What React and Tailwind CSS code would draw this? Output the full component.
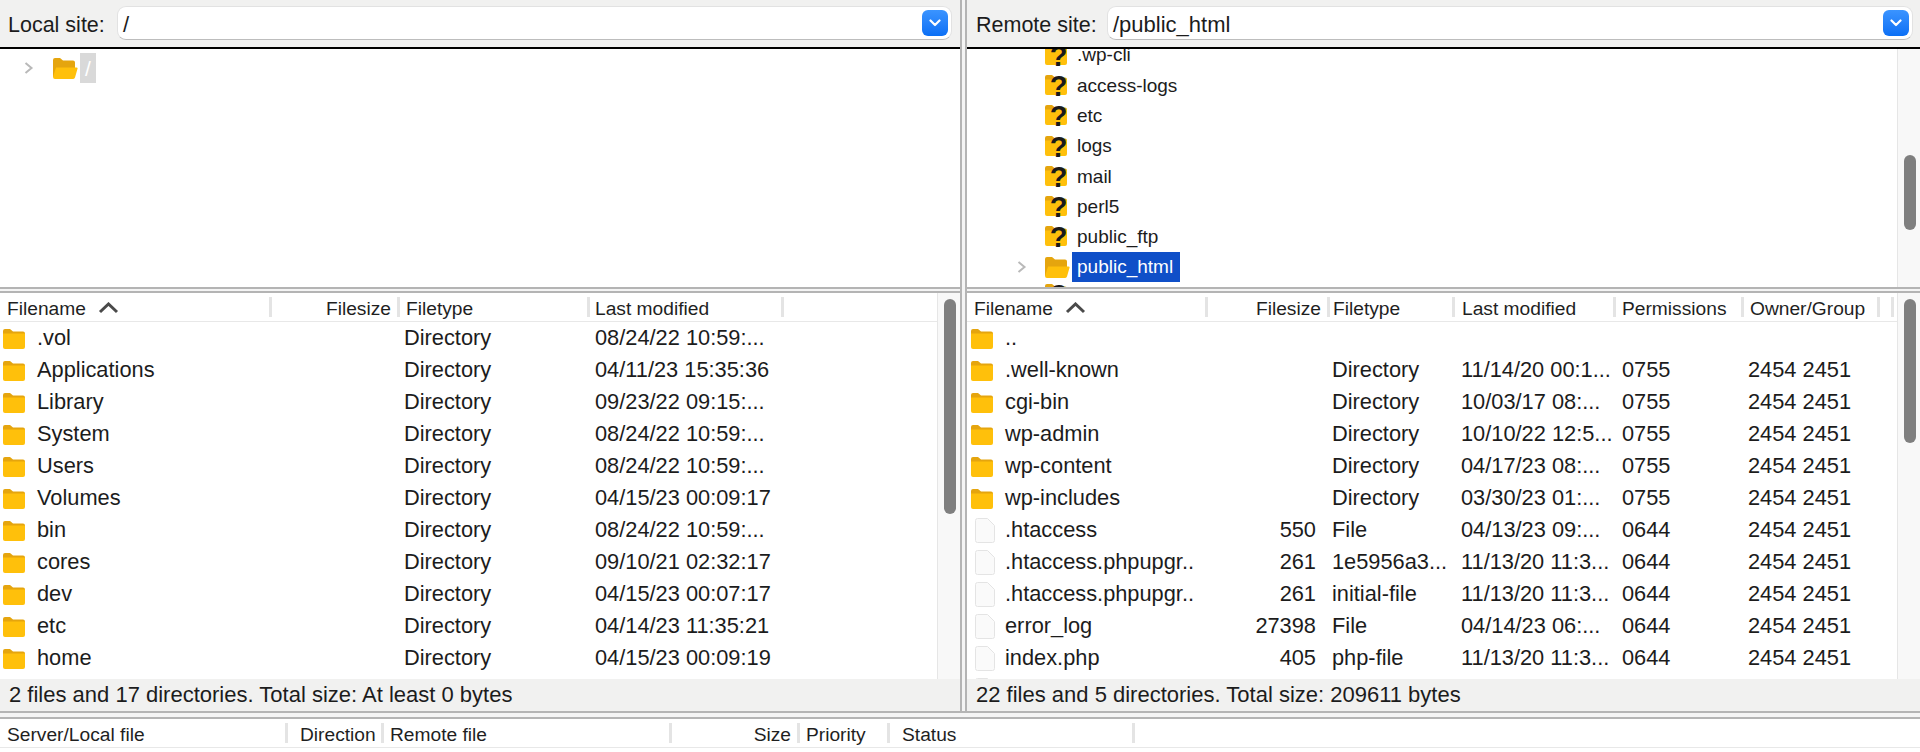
import React from "react";

const localCols = [
  { label: "Filename", w: "w-[272px]", pad: "pl-[7px]", sort: true },
  { label: "Filesize", w: "w-[128px]", pad: "pr-[6px]", right: true },
  { label: "Filetype", w: "w-[190px]", pad: "pl-[6px]" },
  { label: "Last modified", w: "w-[194px]", pad: "pl-[5px]" },
];

const remoteCols = [
  { label: "Filename", w: "w-[241px]", pad: "pl-[7px]", sort: true },
  { label: "Filesize", w: "w-[122px]", pad: "pr-[6px]", right: true },
  { label: "Filetype", w: "w-[125px]", pad: "pl-[3px]" },
  { label: "Last modified", w: "w-[161px]", pad: "pl-[7px]" },
  { label: "Permissions", w: "w-[128px]", pad: "pl-[6px]" },
  { label: "Owner/Group", w: "w-[136px]", pad: "pl-[6px]" },
];

const queueCols = [
  { label: "Server/Local file", w: "w-[288px]", pad: "pl-[7px]" },
  { label: "Direction", w: "w-[96px]", pad: "pl-[12px]" },
  { label: "Remote file", w: "w-[288px]", pad: "pl-[6px]" },
  { label: "Size", w: "w-[128px]", pad: "pr-[6px]", right: true },
  { label: "Priority", w: "w-[90px]", pad: "pl-[6px]" },
  { label: "Status", w: "w-[245px]", pad: "pl-[12px]" },
];

const localFiles = [
  [".vol", "08/24/22 10:59:..."],
  ["Applications", "04/11/23 15:35:36"],
  ["Library", "09/23/22 09:15:..."],
  ["System", "08/24/22 10:59:..."],
  ["Users", "08/24/22 10:59:..."],
  ["Volumes", "04/15/23 00:09:17"],
  ["bin", "08/24/22 10:59:..."],
  ["cores", "09/10/21 02:32:17"],
  ["dev", "04/15/23 00:07:17"],
  ["etc", "04/14/23 11:35:21"],
  ["home", "04/15/23 00:09:19"],
];

const remoteFiles = [
  { name: "..", icon: "folder" },
  { name: ".well-known", icon: "folder", type: "Directory", date: "11/14/20 00:1...", perm: "0755" },
  { name: "cgi-bin", icon: "folder", type: "Directory", date: "10/03/17 08:...", perm: "0755" },
  { name: "wp-admin", icon: "folder", type: "Directory", date: "10/10/22 12:5...", perm: "0755" },
  { name: "wp-content", icon: "folder", type: "Directory", date: "04/17/23 08:...", perm: "0755" },
  { name: "wp-includes", icon: "folder", type: "Directory", date: "03/30/23 01:...", perm: "0755" },
  { name: ".htaccess", icon: "file", size: "550", type: "File", date: "04/13/23 09:...", perm: "0644" },
  { name: ".htaccess.phpupgr..", icon: "file", size: "261", type: "1e5956a3...", date: "11/13/20 11:3...", perm: "0644" },
  { name: ".htaccess.phpupgr..", icon: "file", size: "261", type: "initial-file", date: "11/13/20 11:3...", perm: "0644" },
  { name: "error_log", icon: "file", size: "27398", type: "File", date: "04/14/23 06:...", perm: "0644" },
  { name: "index.php", icon: "file", size: "405", type: "php-file", date: "11/13/20 11:3...", perm: "0644" },
];

const remoteTree = [".wp-cli", "access-logs", "etc", "logs", "mail", "perl5", "public_ftp"];

function FolderIcon() {
  return (
    <svg width="22" height="21" viewBox="0 0 22 21" className="shrink-0">
      <path d="M0 3a2 2 0 0 1 2-2h5l3 2.5h10a2 2 0 0 1 2 2V8H0z" fill="#e5a50e" />
      <path d="M0 5.5h22V19a2 2 0 0 1-2 2H2a2 2 0 0 1-2-2z" fill="#ffc00b" />
    </svg>
  );
}

function OpenFolderIcon() {
  return (
    <svg width="25" height="21" viewBox="0 0 25 21" className="shrink-0">
      <path d="M0 2a2 2 0 0 1 2-2h5l3 2.5h10a2 2 0 0 1 2 2V19H0z" fill="#e5a50e" />
      <path d="M3 9.5h20.5a1 1 0 0 1 1 1.3L22 19.5a2 2 0 0 1-2 1.5H2a2 2 0 0 1-2-2z" fill="#ffc00b" />
    </svg>
  );
}

function FileIcon() {
  return (
    <svg width="20" height="25" viewBox="0 0 20 25" className="shrink-0">
      <path d="M2.5.5h10l7 7v15a2 2 0 0 1-2 2h-15a2 2 0 0 1-2-2v-20a2 2 0 0 1 2-2z" fill="#fafafa" stroke="#e4e4e4" />
    </svg>
  );
}

function UnknownFolderIcon() {
  return (
    <span className="relative block w-[23px] h-[21px] shrink-0 -mt-[2px]">
      <FolderIcon />
      <span className="absolute left-[6px] top-[0px] w-[15px] h-[24px] flex items-center justify-center text-[29px] leading-[24px] font-bold text-[#1a1a1a]">?</span>
    </span>
  );
}

function Chevron() {
  return (
    <svg width="10" height="12" viewBox="0 0 10 12" className="shrink-0">
      <path d="M1.5 1l6 5-6 5" fill="none" stroke="#b9b9b9" strokeWidth="2" />
    </svg>
  );
}

function SiteBar({ label, path, labelW, pad }) {
  return (
    <div className="shrink-0">
      <div className={`h-[47px] bg-[#f1f1f0] flex items-start ${pad}`}>
        <span className={`${labelW} pt-[10px] text-[21.5px] leading-[30px] text-[#1c1c1c]`}>{label}</span>
        <div className="flex-1 h-[34px] mt-[6px] bg-white rounded-[9px] border border-[#e2e2e2] border-b-[#bdbdbd] flex items-center justify-between pl-[5px] pr-[3px]">
          <span className="text-[22px] leading-[30px] text-[#1c1c1c] pt-[4px]">{path}</span>
          <span className="w-[26px] h-[26px] rounded-[6px] bg-gradient-to-b from-[#3a94ff] to-[#0a6ff5] flex items-center justify-center">
            <svg width="12" height="8" viewBox="0 0 12 8">
              <path d="M1.5 1.5L6 6l4.5-4.5" fill="none" stroke="#fff" strokeWidth="2.2" strokeLinecap="round" strokeLinejoin="round" />
            </svg>
          </span>
        </div>
      </div>
      <div className="h-[2px] bg-black" />
    </div>
  );
}

function ColumnHeader({ cols, tail }) {
  return (
    <div className="h-[29px] flex items-center border-b border-[#e8e8e8] bg-white text-[19.2px] text-[#1f1f1f] shrink-0">
      {cols.map((c) => (
        <div key={c.label} className={`${c.w} h-full flex items-center shrink-0`}>
          <div className={`flex-1 min-w-0 flex items-center whitespace-nowrap pt-[4px] ${c.pad} ${c.right ? "justify-end" : ""}`}>
            {c.label}
            {c.sort && (
              <svg width="21" height="12" viewBox="0 0 21 12" className="ml-[12px] -mt-[3px]">
                <path d="M2 10l8.5-8 8.5 8" fill="none" stroke="#4a4a4a" strokeWidth="3" />
              </svg>
            )}
          </div>
          <span className="w-[3px] h-[20px] bg-[#e4e4e4] shrink-0" />
        </div>
      ))}
      {tail}
    </div>
  );
}

function Scrollbar({ thumb }) {
  return (
    <div className="w-[23px] shrink-0 bg-[#f8f8f8] border-l border-[#e6e6e6] pl-[6px]">
      <div className={`w-[12px] rounded-full bg-[#7f7f7f] ${thumb}`} />
    </div>
  );
}

function Row({ children }) {
  return <div className="h-[32px] flex items-center shrink-0 text-[21.8px] text-[#1c1c1c] whitespace-nowrap">{children}</div>;
}

function RowText({ className, children }) {
  return <span className={`pt-[1px] ${className}`}>{children}</span>;
}

function LocalPane() {
  return (
    <div className="w-[960px] flex flex-col shrink-0">
      <SiteBar label="Local site:" path="/" labelW="w-[109px]" pad="pl-[8px] pr-[8px]" />
      <div className="h-[238px] bg-white shrink-0 pt-[4px] pl-[24px] flex items-start">
        <div className="h-[30px] flex items-center">
          <Chevron />
          <span className="ml-[19px]"><OpenFolderIcon /></span>
          <span className="ml-[2px] w-[16px] h-[30px] bg-[#d9d9d9] text-white text-[21px] leading-[32px] text-center">/</span>
        </div>
      </div>
      <HSplit />
      <div className="flex-1 min-h-0 flex">
        <div className="flex-1 min-w-0 flex flex-col overflow-hidden bg-white">
          <ColumnHeader cols={localCols} />
          {localFiles.map(([name, date]) => (
            <Row key={name}>
              <span className="w-[37px] pl-[3px]"><FolderIcon /></span>
              <RowText className="w-[367px]">{name}</RowText>
              <RowText className="w-[191px]">Directory</RowText>
              <RowText>{date}</RowText>
            </Row>
          ))}
        </div>
        <Scrollbar thumb="h-[215px] mt-[6px]" />
      </div>
      <StatusBar>2 files and 17 directories. Total size: At least 0 bytes</StatusBar>
    </div>
  );
}

function RemotePane() {
  return (
    <div className="flex-1 min-w-0 flex flex-col">
      <SiteBar label="Remote site:" path="/public_html" labelW="w-[131px]" pad="pl-[9px] pr-[7px]" />
      <div className="h-[238px] flex shrink-0 bg-white">
        <div className="flex-1 min-w-0 overflow-hidden">
          <div className="-mt-[9px] pl-[78px] text-[19px] text-[#1c1c1c]">
            {remoteTree.map((name) => (
              <div key={name} className="h-[30.3px] flex items-center">
                <UnknownFolderIcon />
                <span className="ml-[9px] pt-[1px]">{name}</span>
              </div>
            ))}
            <div className="h-[30.3px] flex items-center -ml-[28px]">
              <Chevron />
              <span className="ml-[18px]"><OpenFolderIcon /></span>
              <span className="ml-[2px] h-[30px] pl-[5px] pr-[7px] bg-[#0f4fc8] text-white leading-[30px]">public_html</span>
            </div>
            <div className="h-[30.3px] pt-[3px]"><UnknownFolderIcon /></div>
          </div>
        </div>
        <Scrollbar thumb="h-[75px] mt-[106px]" />
      </div>
      <HSplit />
      <div className="flex-1 min-h-0 flex">
        <div className="flex-1 min-w-0 flex flex-col overflow-hidden bg-white">
          <ColumnHeader cols={remoteCols} tail={<span className="w-[3px] h-[20px] bg-[#e4e4e4] ml-[11px] shrink-0" />} />
          {remoteFiles.map((f, i) => (
            <Row key={i}>
              <span className="w-[38px] flex">
                {f.icon === "folder" ? <span className="pl-[4px]"><FolderIcon /></span> : <span className="pl-[8px]"><FileIcon /></span>}
              </span>
              <RowText className="w-[227px]">{f.name}</RowText>
              <RowText className="w-[84px] text-right">{f.size}</RowText>
              <span className="w-[16px]" />
              <RowText className="w-[129px]">{f.type}</RowText>
              <RowText className="w-[161px]">{f.date}</RowText>
              <RowText className="w-[126px]">{f.perm}</RowText>
              {f.type && <RowText>2454 2451</RowText>}
            </Row>
          ))}
          <Row>
            <span className="pl-[8px]"><FileIcon /></span>
          </Row>
        </div>
        <Scrollbar thumb="h-[144px] mt-[6px]" />
      </div>
      <StatusBar>22 files and 5 directories. Total size: 209611 bytes</StatusBar>
    </div>
  );
}

function HSplit() {
  return <div className="h-[6px] shrink-0 bg-[#f4f4f4] border-y-2 border-[#b4b4b4]" />;
}

function StatusBar({ children }) {
  return (
    <div className="h-[32px] shrink-0 bg-[#f1f1f0] flex items-center pl-[9px] pb-[1px] text-[22px] text-[#1c1c1c] whitespace-nowrap">
      {children}
    </div>
  );
}

export default function App() {
  return (
    <div className="h-[752px] w-[1920px] overflow-hidden bg-white flex flex-col font-['Liberation_Sans',Arial,sans-serif]">
      <div className="h-[711px] shrink-0 flex">
        <LocalPane />
        <div className="w-[7px] shrink-0 bg-[#f4f4f4] border-x-2 border-[#b4b4b4]" />
        <RemotePane />
      </div>
      <div className="h-[8px] shrink-0 bg-[#f4f4f4] border-y-2 border-[#b4b4b4]" />
      <ColumnHeader cols={queueCols} />
    </div>
  );
}
